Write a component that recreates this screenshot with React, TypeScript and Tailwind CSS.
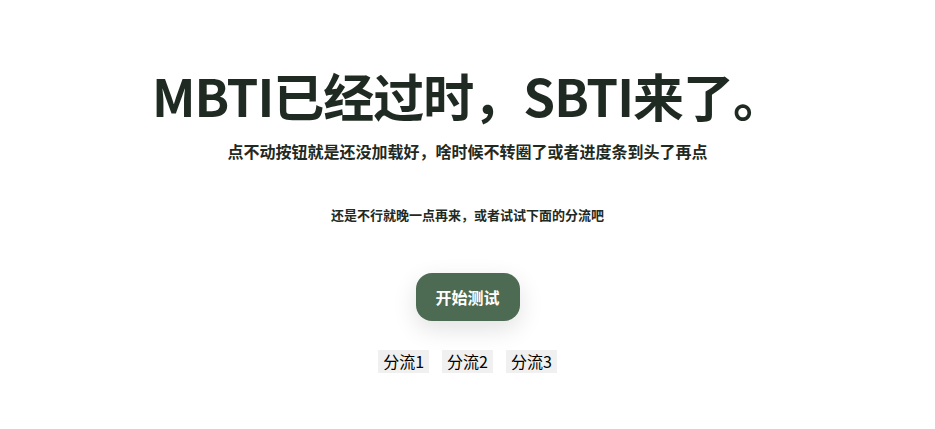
export default function App() {
  return (
    <div
      className="flex min-h-[429px] w-full flex-col items-center bg-white text-[#1f2a22]"
      style={{ fontFamily: '"Noto Sans CJK SC", "Noto Sans", sans-serif' }}
    >
      <h1 className="mt-[60px] text-[51px] font-bold leading-[70px] tracking-[-1px]">
        MBTI已经过时，SBTI来了。
      </h1>
      <p className="mt-[9px] text-[16px] font-bold leading-[24px]">
        点不动按钮就是还没加载好，啥时候不转圈了或者进度条到头了再点
      </p>
      <p className="mt-[42px] text-[13px] font-bold leading-[20px]">
        还是不行就晚一点再来，或者试试下面的分流吧
      </p>
      <button className="mt-[48px] h-[48px] w-[104px] rounded-[16px] bg-[#4d6b53] text-[16px] font-bold text-white shadow-[0_8px_24px_rgba(0,0,0,0.12)]">
        开始测试
      </button>
      <div className="mt-[29px] flex gap-[13px]">
        {['分流1', '分流2', '分流3'].map((t) => (
          <a key={t} className="bg-[#f0f0f0] px-[5px] text-[16px] leading-[23px] text-black">
            {t}
          </a>
        ))}
      </div>
    </div>
  );
}
